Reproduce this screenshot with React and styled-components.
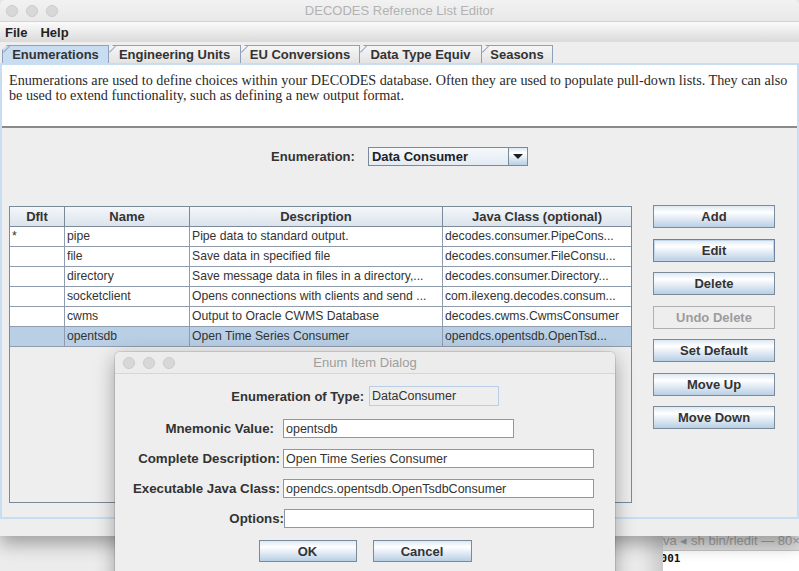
import React from "react";
import styled, { createGlobalStyle } from "styled-components";

const UI = `"Liberation Sans", Arial, sans-serif`;

const Global = createGlobalStyle`
  html, body { margin: 0; padding: 0; background: #ececec; }
  body { font-family: ${UI}; }
  * { box-sizing: border-box; }
`;

const Desktop = styled.div`
  position: relative;
  width: 799px;
  height: 571px;
  overflow: hidden;
  background: #ececec;
`;

const MainWindow = styled.div`
  position: relative;
  z-index: 1;
  width: 799px;
  height: 536px;
  display: flex;
  flex-direction: column;
  background: #eeeeee;
  border-radius: 5px 5px 0 0;
  box-shadow: 0 8px 18px rgba(0, 0, 0, 0.33);
`;

const TitleBar = styled.div`
  flex: none;
  height: 22px;
  display: grid;
  grid-template-columns: 1fr auto 1fr;
  align-items: center;
  background: linear-gradient(#f2f2f2, #e8e8e8);
  border-bottom: 1px solid #d3d3d3;
  border-radius: 5px 5px 0 0;
`;

const Lights = styled.div`
  display: flex;
  gap: 8px;
  margin-left: ${(p) => p.$left}px;
`;

const Light = styled.span`
  width: 12px;
  height: 12px;
  border-radius: 50%;
  background: #d8d8d8;
  border: 1px solid #cbcbcb;
`;

const WindowTitle = styled.div`
  font-size: 13px;
  color: ${(p) => p.$color};
  white-space: nowrap;
`;

const MenuBar = styled.div`
  flex: none;
  height: 20px;
  display: flex;
  align-items: center;
  gap: 13px;
  padding-left: 5px;
  background: linear-gradient(#fbfbfb, #dadada);
  font-weight: bold;
  font-size: 13px;
  color: #222;
`;

const TabStrip = styled.div`
  flex: none;
  height: 18px;
  margin-top: 3px;
  display: flex;
  padding-left: 3px;
`;

const Tab = styled.div`
  position: relative;
  width: ${(p) => p.$w}px;
  height: 18px;
  margin-left: -1px;
  display: flex;
  align-items: center;
  justify-content: center;
  font-weight: bold;
  font-size: 13px;
  color: #333;
  white-space: nowrap;
  border: 1px solid #8ea1bb;
  border-bottom: none;
  background: ${(p) => (p.$active ? "#c8ddf2" : "linear-gradient(#f6f6f6, #e3e3e3)")};
  clip-path: polygon(5px 0, 100% 0, 100% 100%, 0 100%, 0 5px);
  &::before {
    content: "";
    position: absolute;
    left: -0.5px;
    top: 6px;
    width: 8.6px;
    height: 1px;
    background: #8ea1bb;
    transform-origin: 0 0;
    transform: rotate(-45deg);
  }
`;

const TabPanel = styled.div`
  flex: 1;
  min-height: 0;
  display: flex;
  flex-direction: column;
  border: 2px solid #c8ddf2;
`;

const BottomGap = styled.div`
  flex: none;
  height: 17px;
`;

const Description = styled.div`
  flex: none;
  height: 63px;
  background: #ffffff;
  border-bottom: 2px solid #8a8a8a;
  padding: 8px 4px 0 7px;
  font-family: "Liberation Serif", "Times New Roman", serif;
  font-size: 14.2px;
  line-height: 15px;
  color: #2a2a2a;
  white-space: nowrap;
`;

const EnumRow = styled.div`
  flex: none;
  margin-top: 19px;
  height: 19px;
  display: flex;
  justify-content: center;
  align-items: center;
  gap: 13px;
`;

const BoldLabel = styled.span`
  font-weight: bold;
  font-size: 13px;
  color: #333;
  white-space: nowrap;
`;

const buttonGradient = "linear-gradient(#dde8f3 0%, #ffffff 30%, #b8cfe5 100%)";

const Combo = styled.div`
  width: 160px;
  height: 19px;
  display: flex;
  border: 1px solid #7a8a99;
  background: linear-gradient(#f6f9fc, #e2eaf3);
`;

const ComboText = styled.div`
  flex: 1;
  padding-left: 3px;
  font-weight: bold;
  font-size: 13px;
  line-height: 17px;
  color: #222;
`;

const ComboArrow = styled.div`
  width: 19px;
  border-left: 1px solid #7a8a99;
  display: flex;
  align-items: center;
  justify-content: center;
  background: ${buttonGradient};
`;

const Body = styled.div`
  flex: 1;
  min-height: 0;
  margin-top: 40px;
  display: flex;
  gap: 21px;
  padding: 0 22px 14px 7px;
`;

const TableBox = styled.div`
  width: 623px;
  border: 1px solid #7a8a99;
  background: #eeeeee;
  overflow: hidden;
`;

const TableGrid = styled.div`
  display: grid;
  grid-template-columns: 55px 125px 253px 188px;
`;

const HeadCell = styled.div`
  height: 20px;
  border-bottom: 1px solid #7a8a99;
  border-right: ${(p) => (p.$last ? "none" : "1px solid #7a8a99")};
  background: linear-gradient(#f4f7fa, #dbe3ec);
  font-weight: bold;
  font-size: 13px;
  line-height: 19px;
  text-align: center;
  color: #333;
  white-space: nowrap;
`;

const Cell = styled.div`
  height: 20px;
  border-bottom: 1px solid #8f9cad;
  border-right: ${(p) => (p.$last ? "none" : "1px solid #8f9cad")};
  background: ${(p) => (p.$sel ? "#b8cfe5" : "#ffffff")};
  font-size: 12.2px;
  line-height: 19px;
  padding-left: 2px;
  color: #333;
  white-space: nowrap;
  overflow: hidden;
`;

const ButtonCol = styled.div`
  width: 122px;
  flex: none;
  margin-top: -1px;
  display: flex;
  flex-direction: column;
  gap: 10.5px;
`;

const Button = styled.button`
  height: ${(p) => p.$h || 23}px;
  width: ${(p) => (p.$w ? `${p.$w}px` : "auto")};
  padding: 0;
  font-family: ${UI};
  font-weight: bold;
  font-size: 13px;
  color: #333;
  border: 1px solid ${(p) => (p.$focus ? "#6f83a0" : "#7a8a99")};
  background: ${buttonGradient};
  box-shadow: ${(p) => (p.$focus ? "inset 0 0 0 1px #c3d5ea" : "none")};
  &:disabled {
    background: #eeeeee;
    border-color: #b0b0b0;
    color: #9c9c9c;
  }
`;

const Dialog = styled.div`
  position: absolute;
  z-index: 2;
  left: 115px;
  top: 352px;
  width: 500px;
  height: 232px;
  display: flex;
  flex-direction: column;
  background: #eeeeee;
  border-radius: 5px 5px 0 0;
  box-shadow: 0 0 0 1px rgba(0, 0, 0, 0.1), 0 6px 20px rgba(0, 0, 0, 0.35);
`;

const DialogTitleBar = styled(TitleBar)`
  background: #ececec;
  border-bottom: 1px solid #d6d6d6;
`;

const DialogBody = styled.div`
  padding-top: 12px;
  display: flex;
  flex-direction: column;
`;

const TypeRow = styled.div`
  display: flex;
  align-items: center;
  gap: 5px;
  height: 20px;
`;

const TypeLabel = styled(BoldLabel)`
  width: 249px;
  text-align: right;
`;

const FormGrid = styled.div`
  margin-top: 13px;
  display: grid;
  grid-template-columns: 165px 311px;
  column-gap: 3px;
  row-gap: 11px;
  align-items: center;
`;

const FormLabel = styled.label`
  text-align: right;
  font-weight: bold;
  font-size: 13.3px;
  color: #333;
  white-space: nowrap;
  margin-right: ${(p) => p.$shift || 0}px;
`;

const Field = styled.input`
  height: ${(p) => p.$h || 19}px;
  width: ${(p) => p.$w}px;
  margin: 0 0 0 ${(p) => p.$ml || 0}px;
  padding: 0 0 0 2px;
  border: 1px solid ${(p) => (p.$ro ? "#b8cfe5" : "#8d98a6")};
  background: ${(p) => (p.$ro ? "#eeeeee" : "#ffffff")};
  font-family: ${UI};
  font-size: 12.5px;
  color: #333;
  outline: none;
`;

const DialogButtons = styled.div`
  margin-top: 12px;
  display: flex;
  justify-content: center;
  gap: 16px;
`;

const Terminal = styled.div`
  position: absolute;
  z-index: 0;
  left: 663px;
  top: 528px;
  width: 170px;
  height: 60px;
  background: #ffffff;
  overflow: hidden;
  box-shadow: -10px 0 20px rgba(0, 0, 0, 0.16);
`;

const TermTitle = styled.div`
  height: 23px;
  padding-top: 4px;
  background: linear-gradient(#e9e9e9, #dedede);
  border-bottom: 1px solid #c6c6c6;
  font-size: 13px;
  line-height: 18px;
  color: #a4a4a4;
  white-space: nowrap;
  text-indent: -10px;
`;

const TermText = styled.div`
  font-family: "DejaVu Sans Mono", "Liberation Mono", monospace;
  font-weight: bold;
  font-size: 11px;
  line-height: 16px;
  color: #111;
  margin-left: -9px;
`;

const rows = [
  ["*", "pipe", "Pipe data to standard output.", "decodes.consumer.PipeCons..."],
  ["", "file", "Save data in specified file", "decodes.consumer.FileConsu..."],
  ["", "directory", "Save message data in files in a directory,...", "decodes.consumer.Directory..."],
  ["", "socketclient", "Opens connections with clients and send ...", "com.ilexeng.decodes.consum..."],
  ["", "cwms", "Output to Oracle CWMS Database", "decodes.cwms.CwmsConsumer"],
  ["", "opentsdb", "Open Time Series Consumer", "opendcs.opentsdb.OpenTsd..."],
];

const tabs = [
  ["Enumerations", 107, true],
  ["Engineering Units", 133],
  ["EU Conversions", 120],
  ["Data Type Equiv", 123],
  ["Seasons", 72],
];

const headers = ["Dflt", "Name", "Description", "Java Class (optional)"];

function TrafficLights({ left }) {
  return (
    <Lights $left={left}>
      <Light />
      <Light />
      <Light />
    </Lights>
  );
}

export default function App() {
  return (
    <>
      <Global />
      <Desktop>
        <Terminal>
          <TermTitle>java ◂ sh bin/rledit — 80×24</TermTitle>
          <TermText>0001</TermText>
        </Terminal>

        <MainWindow>
          <TitleBar>
            <TrafficLights left={6} />
            <WindowTitle $color="#b2b2b2">DECODES Reference List Editor</WindowTitle>
            <span />
          </TitleBar>
          <MenuBar>
            <span>File</span>
            <span>Help</span>
          </MenuBar>
          <TabStrip>
            {tabs.map(([label, w, active]) => (
              <Tab key={label} $w={w} $active={active}>
                {label}
              </Tab>
            ))}
          </TabStrip>
          <TabPanel>
            <Description>
              Enumerations are used to define choices within your DECODES database. Often they are used to populate pull-down lists. They can also
              <br />
              be used to extend functionality, such as defining a new output format.
            </Description>
            <EnumRow>
              <BoldLabel>Enumeration:</BoldLabel>
              <Combo>
                <ComboText>Data Consumer</ComboText>
                <ComboArrow>
                  <svg width="10" height="5" viewBox="0 0 10 5">
                    <polygon points="0,0 10,0 5,5" fill="#1e1e1e" />
                  </svg>
                </ComboArrow>
              </Combo>
            </EnumRow>
            <Body>
              <TableBox>
                <TableGrid>
                  {headers.map((h, i) => (
                    <HeadCell key={h} $last={i === 3}>
                      {h}
                    </HeadCell>
                  ))}
                  {rows.map((r, ri) =>
                    r.map((c, ci) => (
                      <Cell key={`${ri}-${ci}`} $last={ci === 3} $sel={ri === 5}>
                        {c}
                      </Cell>
                    ))
                  )}
                </TableGrid>
              </TableBox>
              <ButtonCol>
                <Button>Add</Button>
                <Button $focus>Edit</Button>
                <Button>Delete</Button>
                <Button disabled>Undo Delete</Button>
                <Button>Set Default</Button>
                <Button>Move Up</Button>
                <Button>Move Down</Button>
              </ButtonCol>
            </Body>
          </TabPanel>
          <BottomGap />
        </MainWindow>

        <Dialog>
          <DialogTitleBar>
            <TrafficLights left={8} />
            <WindowTitle $color="#9e9e9e">Enum Item Dialog</WindowTitle>
            <span />
          </DialogTitleBar>
          <DialogBody>
            <TypeRow>
              <TypeLabel>Enumeration of Type:</TypeLabel>
              <Field $ro $w={130} $h={20} readOnly defaultValue="DataConsumer" />
            </TypeRow>
            <FormGrid>
              <FormLabel $shift={6}>Mnemonic Value:</FormLabel>
              <Field $w={231} readOnly defaultValue="opentsdb" />
              <FormLabel>Complete Description:</FormLabel>
              <Field $w={311} readOnly defaultValue="Open Time Series Consumer" />
              <FormLabel>Executable Java Class:</FormLabel>
              <Field $w={311} readOnly defaultValue="opendcs.opentsdb.OpenTsdbConsumer" />
              <FormLabel $shift={-4}>Options:</FormLabel>
              <Field $w={310} $ml={1} readOnly defaultValue="" />
            </FormGrid>
            <DialogButtons>
              <Button $w={98} $h={22}>OK</Button>
              <Button $w={99} $h={22}>Cancel</Button>
            </DialogButtons>
          </DialogBody>
        </Dialog>
      </Desktop>
    </>
  );
}
